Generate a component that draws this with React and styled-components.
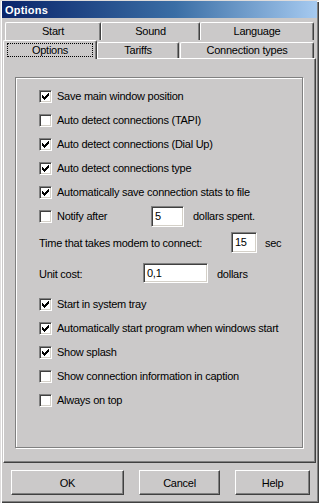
import React from 'react';
import styled, { createGlobalStyle } from 'styled-components';

const FACE = '#cbc9c9';

const Global = createGlobalStyle`
  html, body { margin: 0; padding: 0; background: ${FACE}; }
  body { font-family: "Liberation Sans", Arial, sans-serif; font-size: 11px; letter-spacing: -0.25px; color: #000; }
  * { box-sizing: border-box; }
`;

const Window = styled.div`
  width: 319px;
  height: 503px;
  background: ${FACE};
  display: flex;
  flex-direction: column;
  padding: 1px 2px 2px 2px;
  box-shadow: inset 1px 1px 0 #dedcdc, inset 2px 2px 0 #fff, inset -1px -1px 0 #404040, inset -2px -2px 0 #808080;
`;

const TitleBar = styled.div`
  height: 17px;
  flex: none;
  display: flex;
  align-items: center;
  padding-left: 3px;
  background: linear-gradient(90deg, #0a246a 0%, #3a6ea5 55%, #a6caf0 100%);
  color: #fff;
  font-weight: bold;
  font-size: 11px;
  letter-spacing: 0.2px;
`;

const TabArea = styled.div`
  margin-top: 4px;
  display: flex;
  flex-direction: column;
  flex: none;
`;

const TabRow = styled.div`
  display: flex;
  align-items: flex-end;
  height: 18px;
  margin-left: ${p => p.$indent}px;
`;

const Tab = styled.div`
  position: relative;
  z-index: ${p => (p.$active ? 2 : 1)};
  width: ${p => p.$w}px;
  margin-left: ${p => p.$gap || 0}px;
  height: ${p => (p.$active ? 19 : p.$back ? 18 : 16)}px;
  margin-bottom: ${p => (p.$active ? -1 : 0)}px;
  display: flex;
  align-items: center;
  justify-content: center;
  padding: ${p => (p.$active ? '2px 3px 2px 3px' : '0 0 1px 0')};
  background: ${FACE};
  border-top: 1px solid #fff;
  border-left: 1px solid #fff;
  border-right: 1px solid #404040;
  border-top-left-radius: 2px;
  border-top-right-radius: 2px;
  box-shadow: inset -1px 0 0 #808080;
  font-size: 11px;
  white-space: nowrap;
`;

const FocusLabel = styled.div`
  flex: 1;
  align-self: stretch;
  display: flex;
  align-items: center;
  justify-content: center;
  border: 1px dotted #000;
`;

const Panel = styled.div`
  height: 405px;
  margin: 0 1px;
  flex: none;
  border-top: 1px solid #fff;
  border-left: 1px solid #fff;
  border-right: 1px solid #404040;
  border-bottom: 1px solid #404040;
  box-shadow: inset -1px -1px 0 #808080;
  padding: 18px 0 0 11px;
`;

const Group = styled.div`
  width: 288px;
  height: 371px;
  border: 1px solid #808080;
  box-shadow: 1px 1px 0 #fff, inset 1px 1px 0 #fff;
  padding: 6px 0 0 23px;
  display: flex;
  flex-direction: column;
`;

const Row = styled.div`
  height: 24px;
  flex: none;
  display: flex;
  align-items: center;
  margin-top: ${p => p.$mt || 0}px;
`;

const Box = styled.div`
  width: 13px;
  height: 13px;
  flex: none;
  background: #fff;
  border: 1px solid;
  border-color: #808080 #fff #fff #808080;
  box-shadow: inset 1px 1px 0 #404040, inset -1px -1px 0 #d4d0c8;
  margin-right: 5px;
  position: relative;
`;

const CheckSvg = styled.svg`
  position: absolute;
  left: -1px;
  top: -1px;
  width: 13px;
  height: 13px;
`;

const Label = styled.span`
  display: inline-block;
  width: ${p => (p.$w ? `${p.$w}px` : 'auto')};
  flex: none;
  white-space: nowrap;
  margin-top: ${p => p.$dy || 0}px;
`;

const TextBox = styled.div`
  width: ${p => p.$w}px;
  height: ${p => p.$h || 21}px;
  flex: none;
  background: #fff;
  border: 1px solid;
  border-color: #808080 #fff #fff #808080;
  box-shadow: inset 1px 1px 0 #404040, inset -1px -1px 0 #d4d0c8;
  padding: 3px 0 0 3px;
  line-height: 12px;
  margin-right: ${p => p.$mr}px;
`;

const Footer = styled.div`
  flex: 1;
  display: flex;
  align-items: flex-start;
  padding: 7px 0 0 9px;
  gap: 15px;
`;

const Button = styled.div`
  width: ${p => p.$w}px;
  height: 25px;
  display: flex;
  align-items: center;
  justify-content: center;
  background: ${FACE};
  border-top: 1px solid #fff;
  border-left: 1px solid #fff;
  border-right: 1px solid #404040;
  border-bottom: 1px solid #404040;
  box-shadow: inset -1px -1px 0 #808080;
  font-size: 11px;
`;

const Check = () => (
  <CheckSvg viewBox="0 0 13 13" shapeRendering="crispEdges">
    <rect x="3" y="5" width="1" height="3" fill="#000" />
    <rect x="4" y="6" width="1" height="3" fill="#000" />
    <rect x="5" y="7" width="1" height="3" fill="#000" />
    <rect x="6" y="6" width="1" height="3" fill="#000" />
    <rect x="7" y="5" width="1" height="3" fill="#000" />
    <rect x="8" y="4" width="1" height="3" fill="#000" />
    <rect x="9" y="3" width="1" height="3" fill="#000" />
  </CheckSvg>
);

const CheckBox = ({ checked }) => <Box>{checked && <Check />}</Box>;

const CheckRow = ({ checked, label, mt }) => (
  <Row $mt={mt}>
    <CheckBox checked={checked} />
    <Label>{label}</Label>
  </Row>
);

export default function App() {
  return (
    <>
      <Global />
      <Window>
        <TitleBar>Options</TitleBar>
        <TabArea>
          <TabRow $indent={3}>
            <Tab $back $w={96}>Start</Tab>
            <Tab $back $w={99}>Sound</Tab>
            <Tab $back $w={114}>Language</Tab>
          </TabRow>
          <TabRow $indent={1}>
            <Tab $active $w={94}>
              <FocusLabel>Options</FocusLabel>
            </Tab>
            <Tab $w={82} $gap={0}>Tariffs</Tab>
            <Tab $w={134} $gap={1}>Connection types</Tab>
          </TabRow>
        </TabArea>
        <Panel>
          <Group>
            <CheckRow checked label="Save main window position" />
            <CheckRow label="Auto detect connections (TAPI)" />
            <CheckRow checked label="Auto detect connections (Dial Up)" />
            <CheckRow checked label="Auto detect connections type" />
            <CheckRow checked label="Automatically save connection stats to file" />
            <Row>
              <CheckBox />
              <Label $w={94}>Notify after</Label>
              <TextBox $w={33} $mr={9}>5</TextBox>
              <Label>dollars spent.</Label>
            </Row>
            <Row $mt={2}>
              <Label $w={192} $dy={2}>Time that takes modem to connect:</Label>
              <TextBox $w={26} $mr={8}>15</TextBox>
              <Label $dy={2}>sec</Label>
            </Row>
            <Row $mt={7}>
              <Label $w={104} $dy={2}>Unit cost:</Label>
              <TextBox $w={65} $h={20} $mr={9}>0,1</TextBox>
              <Label $dy={2}>dollars</Label>
            </Row>
            <CheckRow checked mt={7} label="Start in system tray" />
            <CheckRow checked label="Automatically start program when windows start" />
            <CheckRow checked label="Show splash" />
            <CheckRow label="Show connection information in caption" />
            <CheckRow label="Always on top" />
          </Group>
        </Panel>
        <Footer>
          <Button $w={113}>OK</Button>
          <Button $w={81}>Cancel</Button>
          <Button $w={75}>Help</Button>
        </Footer>
      </Window>
    </>
  );
}
